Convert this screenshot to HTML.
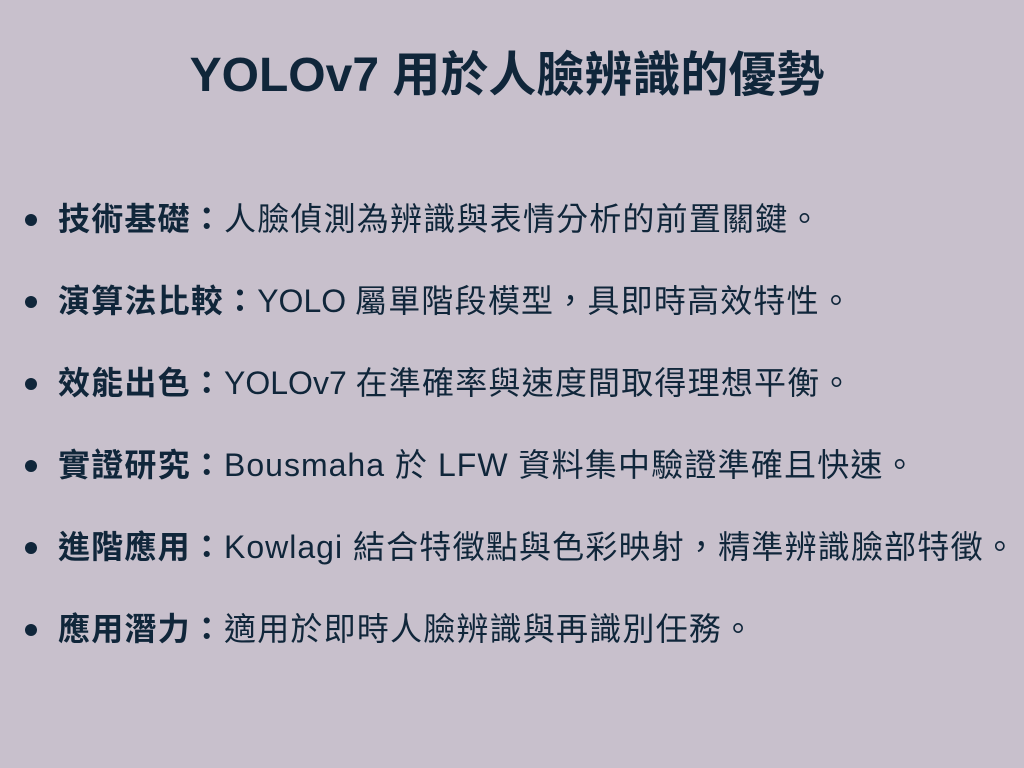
<!DOCTYPE html>
<html><head><meta charset="utf-8"><style>
html,body{margin:0;padding:0}
body{width:1024px;height:768px;background:#c8c0cc;color:#10263a;font-family:"Liberation Sans","Noto Sans CJK TC",sans-serif;position:relative;overflow:hidden}
h1{position:absolute;top:45px;left:0;width:1014px;text-align:center;margin:0;font-size:48px;font-weight:bold;line-height:62px;white-space:nowrap}
.li{position:absolute;left:58px;font-size:32px;line-height:40px;white-space:nowrap;letter-spacing:1.2px}
.li b{font-weight:bold}
.li i{font-style:normal;letter-spacing:0px}
.li i.w{letter-spacing:1px}
.li:before{content:"";position:absolute;left:-33px;top:15px;width:12px;height:12px;border-radius:50%;background:#10263a}
</style></head><body>
<h1>YOLOv7 用於人臉辨識的優勢</h1>
<div class="li" style="top:199px"><b>技術基礎：</b>人臉偵測為辨識與表情分析的前置關鍵。</div>
<div class="li" style="top:281px"><b>演算法比較：</b><i>YOLO </i>屬單階段模型，具即時高效特性。</div>
<div class="li" style="top:363px"><b>效能出色：</b><i>YOLOv7 </i>在準確率與速度間取得理想平衡。</div>
<div class="li" style="top:445px"><b>實證研究：</b><i class="w">Bousmaha </i>於<i class="w"> LFW </i>資料集中驗證準確且快速。</div>
<div class="li" style="top:527px"><b>進階應用：</b><i class="w">Kowlagi </i>結合特徵點與色彩映射，精準辨識臉部特徵。</div>
<div class="li" style="top:609px"><b>應用潛力：</b>適用於即時人臉辨識與再識別任務。</div>
</body></html>
